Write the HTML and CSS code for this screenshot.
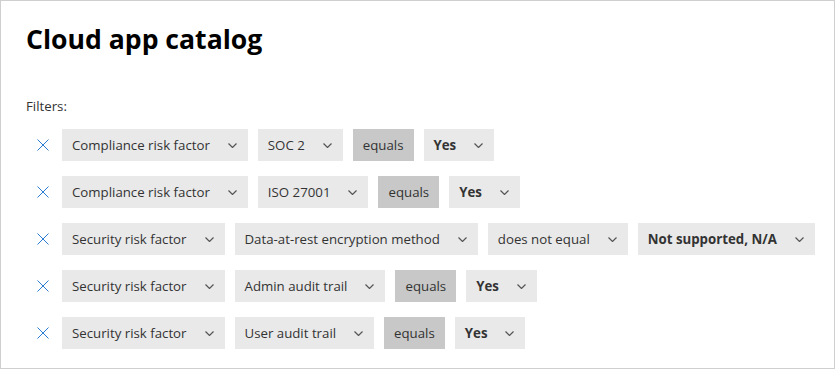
FILE: index.html
```html
<!DOCTYPE html>
<html>
<head>
<meta charset="utf-8">
<link rel="stylesheet" href="styles.css">
</head>
<body>
<div class="frame">
  <h1 class="title">Cloud app catalog</h1>
  <div class="label">Filters:</div>
  <div class="rows">
    <div class="row">
      <span class="remove"><svg width="12" height="12" viewBox="0 0 12 12"><path d="M0.5 0.5 L11.5 11.5 M11.5 0.5 L0.5 11.5" stroke="#2b7cd3" stroke-width="1" fill="none"/></svg></span>
      <div class="sel"><span>Compliance risk factor</span><svg class="chev" width="9" height="5" viewBox="0 0 9 5"><path d="M0.5 0.5 L4.5 4.5 L8.5 0.5" stroke="#555" stroke-width="1.2" fill="none"/></svg></div>
      <div class="sel"><span>SOC 2</span><svg class="chev" width="9" height="5" viewBox="0 0 9 5"><path d="M0.5 0.5 L4.5 4.5 L8.5 0.5" stroke="#555" stroke-width="1.2" fill="none"/></svg></div>
      <div class="op">equals</div>
      <div class="sel bold"><span>Yes</span><svg class="chev" width="9" height="5" viewBox="0 0 9 5"><path d="M0.5 0.5 L4.5 4.5 L8.5 0.5" stroke="#555" stroke-width="1.2" fill="none"/></svg></div>
    </div>
    <div class="row">
      <span class="remove"><svg width="12" height="12" viewBox="0 0 12 12"><path d="M0.5 0.5 L11.5 11.5 M11.5 0.5 L0.5 11.5" stroke="#2b7cd3" stroke-width="1" fill="none"/></svg></span>
      <div class="sel"><span>Compliance risk factor</span><svg class="chev" width="9" height="5" viewBox="0 0 9 5"><path d="M0.5 0.5 L4.5 4.5 L8.5 0.5" stroke="#555" stroke-width="1.2" fill="none"/></svg></div>
      <div class="sel"><span>ISO 27001</span><svg class="chev" width="9" height="5" viewBox="0 0 9 5"><path d="M0.5 0.5 L4.5 4.5 L8.5 0.5" stroke="#555" stroke-width="1.2" fill="none"/></svg></div>
      <div class="op">equals</div>
      <div class="sel bold"><span>Yes</span><svg class="chev" width="9" height="5" viewBox="0 0 9 5"><path d="M0.5 0.5 L4.5 4.5 L8.5 0.5" stroke="#555" stroke-width="1.2" fill="none"/></svg></div>
    </div>
    <div class="row">
      <span class="remove"><svg width="12" height="12" viewBox="0 0 12 12"><path d="M0.5 0.5 L11.5 11.5 M11.5 0.5 L0.5 11.5" stroke="#2b7cd3" stroke-width="1" fill="none"/></svg></span>
      <div class="sel"><span>Security risk factor</span><svg class="chev" width="9" height="5" viewBox="0 0 9 5"><path d="M0.5 0.5 L4.5 4.5 L8.5 0.5" stroke="#555" stroke-width="1.2" fill="none"/></svg></div>
      <div class="sel"><span>Data-at-rest encryption method</span><svg class="chev" width="9" height="5" viewBox="0 0 9 5"><path d="M0.5 0.5 L4.5 4.5 L8.5 0.5" stroke="#555" stroke-width="1.2" fill="none"/></svg></div>
      <div class="sel"><span>does not equal</span><svg class="chev" width="9" height="5" viewBox="0 0 9 5"><path d="M0.5 0.5 L4.5 4.5 L8.5 0.5" stroke="#555" stroke-width="1.2" fill="none"/></svg></div>
      <div class="sel bold"><span>Not supported, N/A</span><svg class="chev" width="9" height="5" viewBox="0 0 9 5"><path d="M0.5 0.5 L4.5 4.5 L8.5 0.5" stroke="#555" stroke-width="1.2" fill="none"/></svg></div>
    </div>
    <div class="row">
      <span class="remove"><svg width="12" height="12" viewBox="0 0 12 12"><path d="M0.5 0.5 L11.5 11.5 M11.5 0.5 L0.5 11.5" stroke="#2b7cd3" stroke-width="1" fill="none"/></svg></span>
      <div class="sel"><span>Security risk factor</span><svg class="chev" width="9" height="5" viewBox="0 0 9 5"><path d="M0.5 0.5 L4.5 4.5 L8.5 0.5" stroke="#555" stroke-width="1.2" fill="none"/></svg></div>
      <div class="sel"><span>Admin audit trail</span><svg class="chev" width="9" height="5" viewBox="0 0 9 5"><path d="M0.5 0.5 L4.5 4.5 L8.5 0.5" stroke="#555" stroke-width="1.2" fill="none"/></svg></div>
      <div class="op">equals</div>
      <div class="sel bold"><span>Yes</span><svg class="chev" width="9" height="5" viewBox="0 0 9 5"><path d="M0.5 0.5 L4.5 4.5 L8.5 0.5" stroke="#555" stroke-width="1.2" fill="none"/></svg></div>
    </div>
    <div class="row">
      <span class="remove"><svg width="12" height="12" viewBox="0 0 12 12"><path d="M0.5 0.5 L11.5 11.5 M11.5 0.5 L0.5 11.5" stroke="#2b7cd3" stroke-width="1" fill="none"/></svg></span>
      <div class="sel"><span>Security risk factor</span><svg class="chev" width="9" height="5" viewBox="0 0 9 5"><path d="M0.5 0.5 L4.5 4.5 L8.5 0.5" stroke="#555" stroke-width="1.2" fill="none"/></svg></div>
      <div class="sel"><span>User audit trail</span><svg class="chev" width="9" height="5" viewBox="0 0 9 5"><path d="M0.5 0.5 L4.5 4.5 L8.5 0.5" stroke="#555" stroke-width="1.2" fill="none"/></svg></div>
      <div class="op">equals</div>
      <div class="sel bold"><span>Yes</span><svg class="chev" width="9" height="5" viewBox="0 0 9 5"><path d="M0.5 0.5 L4.5 4.5 L8.5 0.5" stroke="#555" stroke-width="1.2" fill="none"/></svg></div>
    </div>
  </div>
</div>
</body>
</html>
```
FILE: styles.css
```css
html, body {
  margin: 0;
  padding: 0;
  background: #fff;
}
.frame {
  box-sizing: border-box;
  width: 835px;
  height: 369px;
  border: 1px solid #cfcfcf;
  padding: 0 0 0 25px;
  font-family: "Segoe UI", "Open Sans", sans-serif;
  color: #333;
}
.title {
  margin: 0;
  padding-top: 19px;
  font-size: 26.6px;
  line-height: 38px;
  font-weight: 700;
  color: #000;
}
.label {
  margin-top: 38px;
  font-size: 13.25px;
  line-height: 20px;
}
.rows {
  margin-top: 13px;
  display: flex;
  flex-direction: column;
  gap: 15px;
}
.row {
  display: flex;
  align-items: center;
  gap: 10px;
  height: 32px;
}
.remove {
  display: flex;
  flex-shrink: 0;
  width: 12px;
  margin-left: 11px;
  margin-right: 3px;
}
.sel, .op {
  box-sizing: border-box;
  flex-shrink: 0;
  white-space: nowrap;
  height: 32px;
  display: flex;
  align-items: center;
  font-size: 13.25px;
  color: #333;
  background: #e9e9e9;
}
.sel {
  padding: 0 11px 0 10px;
}
.sel .chev {
  margin-left: 18px;
}
.op {
  padding: 0 10px;
  background: #c8c8c8;
}
.bold {
  font-weight: 700;
}
```
